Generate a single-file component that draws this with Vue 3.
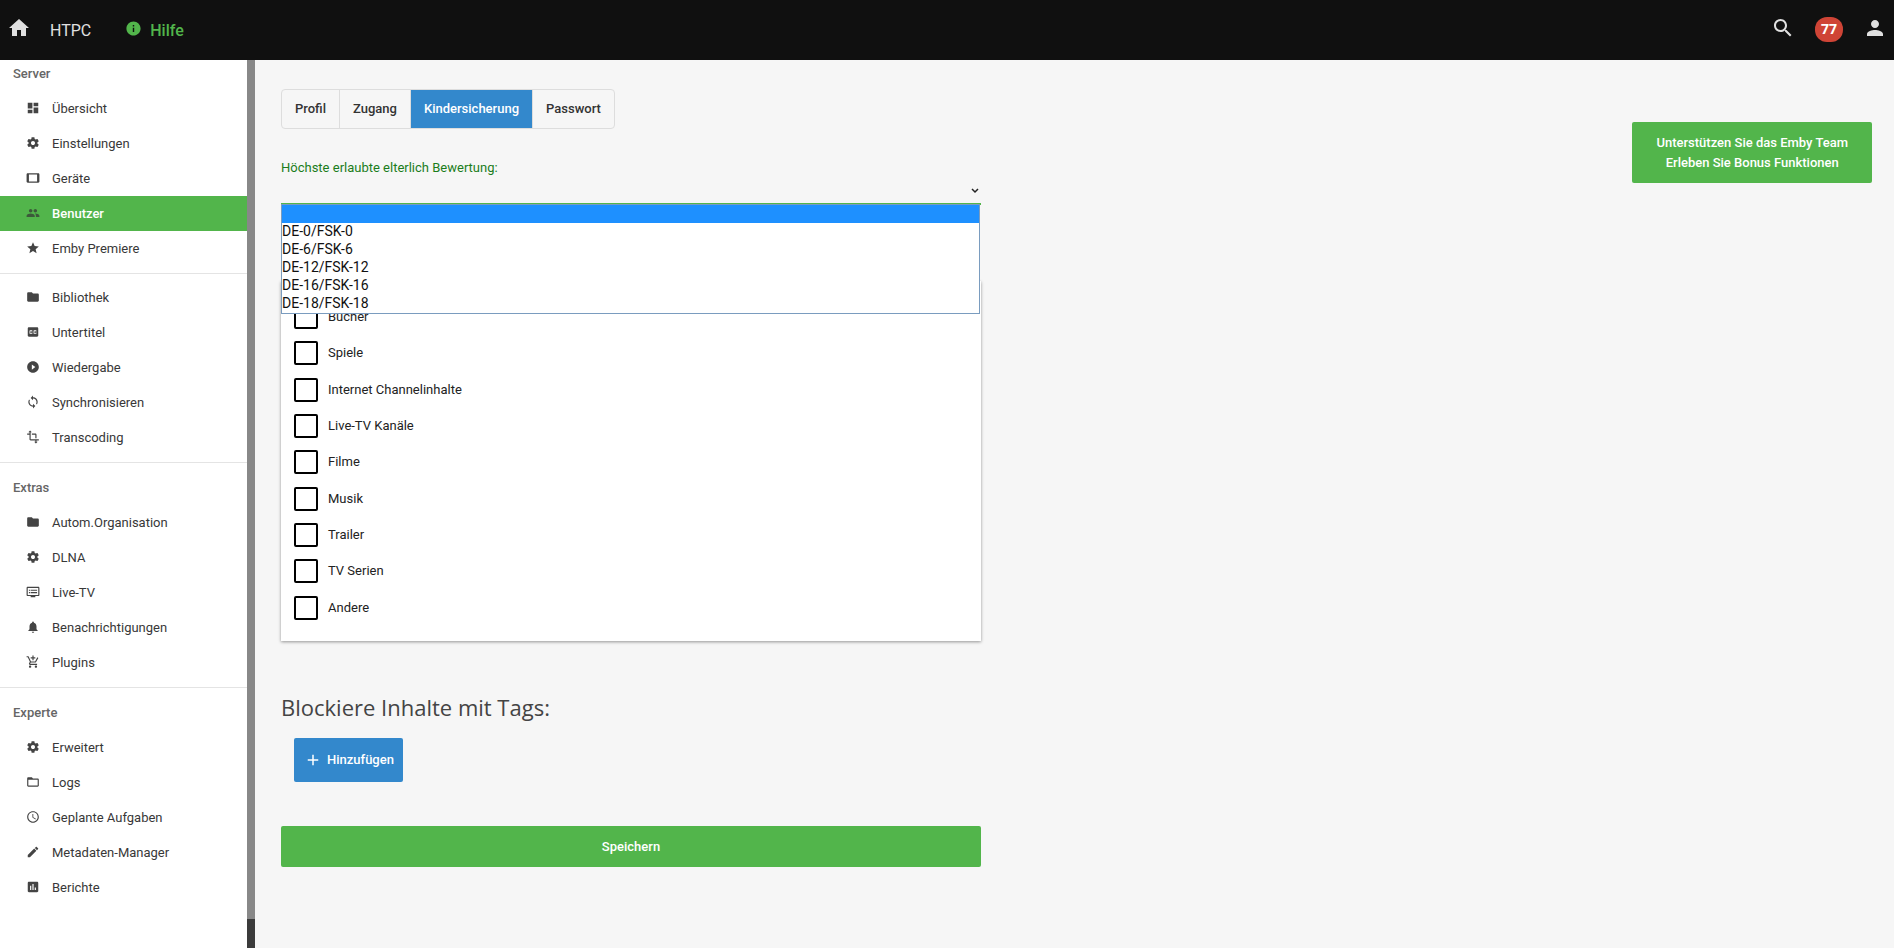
<script setup>
import { ref } from 'vue'

const icons = {
  home: 'M10 20v-6h4v6h5v-8h3L12 3 2 12h3v8z',
  info: 'M12 2C6.48 2 2 6.48 2 12s4.48 10 10 10 10-4.480 10-10S17.520 2 12 2zm1 15h-2v-6h2v6zm0-8h-2V7h2v2z',
  search: 'M15.500 14h-.79l-.28-.27C15.410 12.590 16 11.110 16 9.500 16 5.910 13.090 3 9.500 3S3 5.910 3 9.500 5.910 16 9.500 16c1.610 0 3.090-.59 4.230-1.570l.27.28v.79l5 4.990L20.490 19l-4.990-5zm-6 0C7.010 14 5 11.990 5 9.500S7.010 5 9.500 5 14 7.010 14 9.500 11.990 14 9.500 14z',
  person: 'M12 12c2.210 0 4-1.790 4-4s-1.790-4-4-4-4 1.790-4 4 1.790 4 4 4zm0 2c-2.670 0-8 1.340-8 4v2h16v-2c0-2.660-5.330-4-8-4z',
  dashboard: 'M3 13h8V3H3v10zm0 8h8v-6H3v6zm10 0h8V11h-8v10zm0-18v6h8V3h-8z',
  settings: 'M19.430 12.980c.04-.32.070-.64.070-.98s-.03-.66-.07-.98l2.110-1.650c.19-.15.240-.42.120-.64l-2-3.460c-.12-.22-.39-.3-.61-.22l-2.490 1c-.52-.4-1.080-.73-1.690-.98l-.38-2.650C14.460 2.180 14.250 2 14 2h-4c-.25 0-.46.180-.49.420l-.38 2.650c-.61.250-1.170.590-1.690.980l-2.490-1c-.23-.09-.49 0-.61.220l-2 3.460c-.13.220-.07.490.12.640l2.110 1.650c-.04.320-.07.650-.07.980s.03.660.070.980l-2.110 1.650c-.19.150-.24.420-.12.640l2 3.460c.12.220.390.300.610.220l2.490-1c.52.400 1.080.730 1.690.980l.38 2.650c.03.240.240.420.490.420h4c.25 0 .46-.18.490-.42l.38-2.650c.61-.25 1.170-.59 1.690-.98l2.490 1c.23.090.490 0 .61-.22l2-3.460c.12-.22.070-.49-.12-.64l-2.110-1.650zM12 15.500c-1.930 0-3.500-1.570-3.500-3.500s1.570-3.500 3.500-3.500 3.500 1.570 3.500 3.500-1.570 3.500-3.500 3.500z',
  tablet: 'M21 4H3c-1.100 0-2 .9-2 2v12c0 1.100.9 2 2 2h18c1.100 0 1.990-.9 1.990-2L23 6c0-1.100-.9-2-2-2zm-2 14H5V6h14v12z',
  group: 'M16 11c1.660 0 2.990-1.340 2.990-3S17.660 5 16 5c-1.660 0-3 1.340-3 3s1.340 3 3 3zm-8 0c1.660 0 2.990-1.340 2.990-3S9.660 5 8 5C6.340 5 5 6.340 5 8s1.340 3 3 3zm0 2c-2.330 0-7 1.170-7 3.500V19h14v-2.500c0-2.330-4.670-3.500-7-3.500zm8 0c-.29 0-.62.020-.97.050 1.160.840 1.970 1.970 1.970 3.450V19h6v-2.500c0-2.330-4.670-3.500-7-3.500z',
  star: 'M12 17.270L18.180 21l-1.640-7.030L22 9.240l-7.190-.61L12 2 9.190 8.630 2 9.240l5.460 4.730L5.820 21z',
  folder: 'M10 4H4c-1.100 0-1.990.9-1.990 2L2 18c0 1.100.9 2 2 2h16c1.100 0 2-.9 2-2V8c0-1.100-.9-2-2-2h-8l-2-2z',
  captions: 'M19 4H5c-1.110 0-2 .9-2 2v12c0 1.100.890 2 2 2h14c1.100 0 2-.9 2-2V6c0-1.100-.9-2-2-2zm-8 7H9.500v-.5h-2v3h2V13H11v1c0 .55-.45 1-1 1H7c-.55 0-1-.45-1-1v-4c0-.55.450-1 1-1h3c.55 0 1 .45 1 1v1zm7 0h-1.500v-.5h-2v3h2V13H18v1c0 .55-.45 1-1 1h-3c-.55 0-1-.45-1-1v-4c0-.55.450-1 1-1h3c.55 0 1 .45 1 1v1z',
  play: 'M12 2C6.480 2 2 6.480 2 12s4.480 10 10 10 10-4.480 10-10S17.520 2 12 2zm-2 14.500v-9l6 4.500-6 4.500z',
  sync: 'M12 4V1L8 5l4 4V6c3.310 0 6 2.690 6 6 0 1.010-.25 1.970-.7 2.800l1.460 1.460C19.540 15.030 20 13.570 20 12c0-4.420-3.580-8-8-8zm0 14c-3.310 0-6-2.690-6-6 0-1.010.250-1.970.700-2.800L5.240 7.740C4.460 8.970 4 10.430 4 12c0 4.420 3.580 8 8 8v3l4-4-4-4v3z',
  crop: 'M22 18v-2H8V4h2L7 1 4 4h2v2H2v2h4v8c0 1.100.9 2 2 2h8v2h-2l3 3 3-3h-2v-2h4zM10 8h6v6h2V8c0-1.100-.9-2-2-2h-6v2z',
  livetv: 'M21 3H3c-1.100 0-2 .9-2 2v12c0 1.100.9 2 2 2h5v2h8v-2h5c1.100 0 1.990-.9 1.990-2L23 5c0-1.100-.9-2-2-2zm0 14H3V5h18v12zm-2-9H8v2h11V8zm0 4H8v2h11v-2zM7 8H5v2h2V8zm0 4H5v2h2v-2z',
  bell: 'M12 22c1.100 0 2-.9 2-2h-4c0 1.100.890 2 2 2zm6-6v-5c0-3.070-1.640-5.640-4.500-6.320V4c0-.83-.67-1.500-1.500-1.500s-1.500.67-1.500 1.500v.68C7.630 5.360 6 7.920 6 11v5l-2 2v1h16v-1l-2-2z',
  cart: 'M11 9h2V6h3V4h-3V1h-2v3H8v2h3v3zm-4 9c-1.100 0-1.990.9-1.990 2S5.900 22 7 22s2-.9 2-2-.9-2-2-2zm10 0c-1.100 0-1.990.9-1.990 2s.89 2 1.990 2 2-.9 2-2-.9-2-2-2zm-9.830-3.250l.03-.12.900-1.630h7.450c.75 0 1.410-.41 1.750-1.030l3.860-7.010L19.420 4h-.01l-1.100 2-2.760 5H8.530l-.13-.27L6.160 6l-.95-2-.94-2H1v2h2l3.600 7.590-1.350 2.450c-.16.280-.25.610-.25.960 0 1.100.9 2 2 2h12v-2H7.420c-.13 0-.25-.11-.25-.25z',
  folderOpen: 'M20 6h-8l-2-2H4c-1.100 0-1.990.9-1.990 2L2 18c0 1.100.9 2 2 2h16c1.100 0 2-.9 2-2V8c0-1.100-.9-2-2-2zm0 12H4V8h16v10z',
  clock: 'M11.990 2C6.470 2 2 6.480 2 12s4.470 10 9.990 10C17.520 22 22 17.520 22 12S17.520 2 11.990 2zM12 20c-4.420 0-8-3.580-8-8s3.580-8 8-8 8 3.580 8 8-3.580 8-8 8zm.5-13H11v6l5.250 3.150.75-1.230-4.500-2.670z',
  pencil: 'M3 17.250V21h3.750L17.810 9.940l-3.750-3.750L3 17.250zM20.710 7.040c.39-.39.390-1.020 0-1.410l-2.340-2.340c-.39-.39-1.020-.39-1.410 0l-1.830 1.830 3.750 3.750 1.830-1.830z',
  chart: 'M19 3H5c-1.100 0-2 .9-2 2v14c0 1.100.9 2 2 2h14c1.100 0 2-.9 2-2V5c0-1.100-.9-2-2-2zM9 17H7v-7h2v7zm4 0h-2V7h2v10zm4 0h-2v-4h2v4z',
  plus: 'M19 13h-6v6h-2v-6H5v-2h6V5h2v6h6v2z'
}

const groups = [
  {
    title: 'Server',
    items: [
      ['Übersicht', 'dashboard'],
      ['Einstellungen', 'settings'],
      ['Geräte', 'tablet'],
      ['Benutzer', 'group'],
      ['Emby Premiere', 'star']
    ]
  },
  {
    title: '',
    items: [
      ['Bibliothek', 'folder'],
      ['Untertitel', 'captions'],
      ['Wiedergabe', 'play'],
      ['Synchronisieren', 'sync'],
      ['Transcoding', 'crop']
    ]
  },
  {
    title: 'Extras',
    items: [
      ['Autom.Organisation', 'folder'],
      ['DLNA', 'settings'],
      ['Live-TV', 'livetv'],
      ['Benachrichtigungen', 'bell'],
      ['Plugins', 'cart']
    ]
  },
  {
    title: 'Experte',
    items: [
      ['Erweitert', 'settings'],
      ['Logs', 'folderOpen'],
      ['Geplante Aufgaben', 'clock'],
      ['Metadaten-Manager', 'pencil'],
      ['Berichte', 'chart']
    ]
  }
]

const tabs = ['Profil', 'Zugang', 'Kindersicherung', 'Passwort']
const ratings = ['', 'DE-0/FSK-0', 'DE-6/FSK-6', 'DE-12/FSK-12', 'DE-16/FSK-16', 'DE-18/FSK-18']
const categories = ['Bücher', 'Spiele', 'Internet Channelinhalte', 'Live-TV Kanäle', 'Filme', 'Musik', 'Trailer', 'TV Serien', 'Andere']

const activeItem = ref('Benutzer')
const activeTab = ref('Kindersicherung')
const rating = ref('')
const menuOpen = ref(true)
const blocked = ref([])

function pick(value) {
  rating.value = value
  menuOpen.value = false
}
</script>

<template>
  <div class="app">
    <header class="topbar">
      <button class="icon-btn" type="button" aria-label="Startseite">
        <svg class="icon-lg" viewBox="0 0 24 24"><path :d="icons.home" /></svg>
      </button>
      <span class="server-name">HTPC</span>
      <a class="help" href="#">
        <svg class="icon-md" viewBox="0 0 24 24"><path :d="icons.info" /></svg>
        <span>Hilfe</span>
      </a>
      <div class="top-actions">
        <button class="icon-btn" type="button" aria-label="Suche">
          <svg class="icon-lg" viewBox="0 0 24 24"><path :d="icons.search" /></svg>
        </button>
        <button class="badge" type="button">77</button>
        <button class="icon-btn" type="button" aria-label="Benutzerkonto">
          <svg class="icon-lg" viewBox="0 0 24 24"><path :d="icons.person" /></svg>
        </button>
      </div>
    </header>

    <div class="body">
      <nav class="sidebar">
        <section v-for="(group, i) in groups" :key="i" class="group">
          <h3 v-if="group.title" class="group-title">{{ group.title }}</h3>
          <a
            v-for="[label, icon] in group.items"
            :key="label"
            href="#"
            class="nav-item"
            :class="{ active: label === activeItem }"
            @click.prevent="activeItem = label"
          >
            <svg class="nav-icon" viewBox="0 0 24 24"><path :d="icons[icon]" /></svg>
            <span>{{ label }}</span>
          </a>
        </section>
      </nav>
      <div class="scroll-track"><div class="scroll-thumb"></div></div>

      <main class="content">
        <form class="form" @submit.prevent>
          <div class="tabs">
            <button
              v-for="tab in tabs"
              :key="tab"
              type="button"
              class="tab"
              :class="{ active: tab === activeTab }"
              @click="activeTab = tab"
            >{{ tab }}</button>
          </div>

          <label class="field-label" for="rating">Höchste erlaubte elterlich Bewertung:</label>
          <div class="select-wrap">
            <select id="rating" v-model="rating" class="select" @mousedown.prevent="menuOpen = !menuOpen">
              <option v-for="r in ratings" :key="r" :value="r">{{ r }}</option>
            </select>
            <svg class="chevron" viewBox="0 0 8 6"><path d="M1 1l3 3 3-3" /></svg>
            <ul v-if="menuOpen" class="menu" role="listbox" aria-label="Bewertung">
              <li
                v-for="r in ratings"
                :key="r"
                role="option"
                class="menu-item"
                :class="{ selected: r === rating }"
                :aria-selected="r === rating"
                @click="pick(r)"
              >{{ r }}</li>
            </ul>
          </div>

          <div class="card">
            <label v-for="c in categories" :key="c" class="check">
              <input v-model="blocked" type="checkbox" :value="c" />
              <span>{{ c }}</span>
            </label>
          </div>

          <h2 class="heading">Blockiere Inhalte mit Tags:</h2>
          <button class="add" type="button">
            <svg class="icon-add" viewBox="0 0 24 24"><path :d="icons.plus" /></svg>
            <span>Hinzufügen</span>
          </button>
          <button class="save" type="submit">Speichern</button>
        </form>

        <button class="support" type="button">Unterstützen Sie das Emby Team<br />Erleben Sie Bonus Funktionen</button>
      </main>
    </div>
  </div>
</template>

<style>
body {
  margin: 0;
}
</style>

<style scoped>
.app {
  display: flex;
  flex-direction: column;
  height: 100vh;
  overflow: hidden;
  background: #f6f6f6;
  color: #222;
  font: 400 13px/20px Roboto, "Liberation Sans", sans-serif;
}
.app * {
  box-sizing: border-box;
}
button {
  margin: 0;
  padding: 0;
  border: 0;
  background: none;
  color: inherit;
  font: inherit;
  cursor: pointer;
}
a {
  color: inherit;
  text-decoration: none;
}
svg {
  display: block;
  flex: none;
  fill: currentColor;
}
.topbar {
  display: flex;
  align-items: center;
  flex: none;
  height: 60px;
  padding: 0 7px 4px;
  background: #101010;
  color: #e0e0e0;
}
.icon-lg {
  width: 24px;
  height: 24px;
}
.icon-md {
  width: 17px;
  height: 17px;
}
.server-name {
  padding-top: 6px;
  margin-left: 19px;
  font-size: 16px;
}
.help {
  display: flex;
  align-items: center;
  gap: 8px;
  margin-left: 34px;
  color: #52b54b;
  font-size: 16px;
  font-weight: 500;
}
.help span {
  padding-top: 6px;
}
.top-actions {
  display: flex;
  align-items: center;
  gap: 20px;
  margin-left: auto;
}
.badge {
  width: 28px;
  height: 25px;
  margin-top: 2px;
  border-radius: 12px;
  background: #cf4436;
  color: #fff;
  font: 700 14px/24px "Open Sans", sans-serif;
}
.body {
  display: flex;
  flex: 1;
  min-height: 0;
}
.sidebar {
  flex: none;
  width: 247px;
  padding-top: 4px;
  overflow: hidden;
  background: #fff;
}
.group + .group {
  margin-top: 7px;
  padding-top: 6px;
  border-top: 1px solid #e4e4e4;
}
.group-title {
  margin: 0 0 7px 13px;
  color: #666;
  font-size: 13px;
  font-weight: 500;
}
.group + .group .group-title {
  padding-top: 9px;
}
.nav-item {
  display: flex;
  align-items: center;
  gap: 12px;
  height: 35px;
  padding-left: 26px;
  color: #383838;
}
.nav-icon {
  width: 14px;
  height: 14px;
  margin-bottom: 2px;
  color: #444;
}
.nav-item.active {
  background: #52b54b;
  color: #fff;
  font-weight: 500;
}
.nav-item.active .nav-icon {
  color: #3c5a3a;
}
.scroll-track {
  display: flex;
  flex: none;
  width: 8px;
  padding-bottom: 29px;
  background: #3b3b3b;
}
.scroll-thumb {
  flex: 1;
  background: #888;
}
.content {
  display: flex;
  align-items: flex-start;
  justify-content: space-between;
  flex: 1;
  min-width: 0;
  padding: 29px 22px 0 26px;
}
.form {
  display: flex;
  flex-direction: column;
  align-items: flex-start;
  width: 100%;
  max-width: 700px;
}
.tabs {
  display: flex;
  height: 40px;
  overflow: hidden;
  border: 1px solid #ddd;
  border-radius: 4px;
}
.tab {
  padding: 0 13px;
  color: #333;
  font-weight: 500;
}
.tab + .tab {
  border-left: 1px solid #ddd;
}
.tab.active {
  background: #3388cc;
  color: #fff;
}
.field-label {
  margin-top: 29px;
  color: #1b7d1b;
}
.select-wrap {
  position: relative;
  width: 100%;
}
.select {
  display: block;
  width: 100%;
  height: 27px;
  padding: 0;
  border: 0;
  border-bottom: 2px solid #52b54b;
  border-radius: 0;
  outline: 0;
  appearance: none;
  background: transparent;
  font: inherit;
}
.chevron {
  position: absolute;
  top: 10px;
  right: 2px;
  width: 8px;
  height: 6px;
  fill: none;
  stroke: #222;
  stroke-width: 1.5;
  pointer-events: none;
}
.menu {
  position: absolute;
  z-index: 2;
  top: 26px;
  left: 0;
  right: 1px;
  margin: 0;
  padding: 0;
  border: 1px solid #7a9cbf;
  background: #fff;
  list-style: none;
}
.menu-item {
  height: 18px;
  color: #111;
  font-size: 14px;
  line-height: 16px;
}
.menu-item.selected {
  background: #1e90ff;
}
.card {
  display: grid;
  grid-auto-rows: 1fr;
  width: 100%;
  min-height: 360px;
  margin-top: 76px;
  padding: 18px 13px 15px;
  background: #fff;
  box-shadow: 0 1px 3px rgba(0, 0, 0, 0.4);
}
.check {
  display: flex;
  align-items: center;
  gap: 10px;
}
.check input {
  width: 24px;
  height: 24px;
  margin: 0;
  border: 2px solid #000;
  border-radius: 2px;
  appearance: none;
  background: #fff;
}
.check input:checked {
  background: #52b54b;
}
.heading {
  margin: 51px 0 16px;
  color: #444;
  font: 400 22px/30px "Open Sans", sans-serif;
}
.add {
  display: flex;
  align-items: center;
  gap: 5px;
  height: 44px;
  margin-left: 13px;
  padding: 0 9px 0 10px;
  border-radius: 2px;
  background: #3388cc;
  color: #fff;
  font-weight: 500;
}
.icon-add {
  width: 18px;
  height: 18px;
}
.save {
  width: 100%;
  height: 41px;
  margin-top: 44px;
  border-radius: 2px;
  background: #52b54b;
  color: #fff;
  font-weight: 500;
}
.support {
  flex: none;
  margin-top: 33px;
  padding: 11px 24px 10px;
  border-radius: 2px;
  background: #52b54b;
  color: #fff;
  font-weight: 500;
}
</style>
